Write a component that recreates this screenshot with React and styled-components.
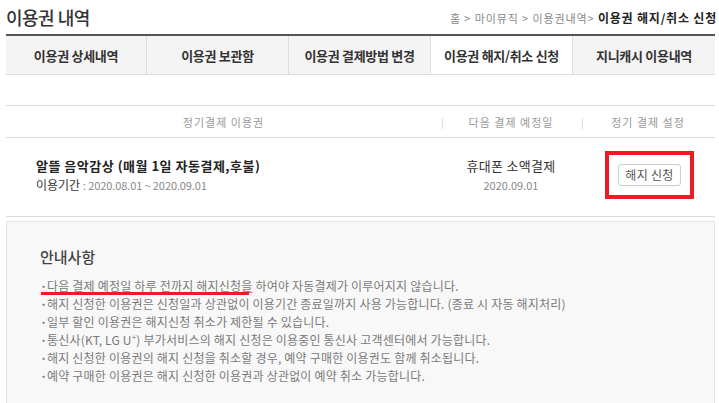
import React from "react";
import styled, { createGlobalStyle } from "styled-components";

const GlobalStyle = createGlobalStyle`
  html, body {
    margin: 0;
    padding: 0;
    background: #ffffff;
    font-family: "Noto Sans CJK KR", "Noto Sans", sans-serif;
    color: #333;
    overflow: hidden;
  }
`;

const Page = styled.div`
  width: 719px;
  height: 403px;
  box-sizing: border-box;
  padding: 0 4px 0 6px;
  overflow: hidden;
`;

const TopBar = styled.div`
  display: flex;
  justify-content: space-between;
  align-items: center;
  height: 34px;
`;

const Title = styled.h2`
  margin: 0;
  font-size: 18px;
  font-weight: 500;
  color: #333;
  letter-spacing: -0.5px;
`;

const Breadcrumb = styled.div`
  font-size: 11px;
  color: #888;
  letter-spacing: 0.9px;
  margin-right: -2px;

  strong {
    color: #222;
    font-size: 12px;
    font-weight: 700;
    letter-spacing: 0.8px;
  }
`;

const Tabs = styled.ul`
  display: grid;
  grid-template-columns: 140px 142px 142px 142px 1fr;
  margin: 0;
  padding: 0;
  list-style: none;
  border-top: 2px solid #555;
  border-bottom: 1px solid #ddd;
  height: 38px;
`;

const Tab = styled.li`
  display: flex;
  align-items: center;
  justify-content: center;
  font-size: 13px;
  font-weight: 700;
  color: #333;
  background: ${(p) => (p.$active ? "#fff" : "#f4f4f4")};
  border-left: ${(p) => (p.$first ? "none" : "1px solid #ddd")};
  letter-spacing: -0.3px;
`;

const Table = styled.div`
  margin-top: 30px;
  border-top: 1px solid #ddd;
`;

const HeadRow = styled.div`
  display: grid;
  grid-template-columns: 435px 140px 1fr;
  height: 31px;
  align-items: center;
  border-bottom: 1px solid #ddd;
`;

const HeadCell = styled.div`
  position: relative;
  text-align: center;
  font-size: 11px;
  color: #999;
  letter-spacing: 1px;

  &::before {
    content: "${(p) => (p.$sep ? "|" : "")}";
    position: absolute;
    left: 0;
    top: 0;
    color: #ccc;
    font-size: 10px;
  }
`;

const BodyRow = styled.div`
  display: grid;
  grid-template-columns: 435px 140px 1fr;
  height: 78px;
  align-items: center;
  border-bottom: 1px solid #ddd;
`;

const Product = styled.div`
  padding-left: 30px;
  padding-bottom: 4px;
`;

const ProductName = styled.div`
  font-size: 13px;
  font-weight: 700;
  color: #222;
  letter-spacing: 0.5px;
  line-height: 20px;
`;

const Period = styled.div`
  font-size: 12px;
  color: #333;
  line-height: 18px;

  span {
    font-size: 11px;
    color: #888;
    letter-spacing: -0.1px;
  }
`;

const PayCell = styled.div`
  text-align: center;
  padding-bottom: 4px;
`;

const PayMethod = styled.div`
  font-size: 13px;
  color: #333;
  line-height: 20px;
  letter-spacing: 0.3px;
`;

const PayDate = styled.div`
  font-size: 11px;
  color: #888;
  line-height: 18px;
`;

const SettingCell = styled.div`
  display: flex;
  justify-content: center;
  padding-left: 3px;
  padding-bottom: 4px;
`;

const Highlight = styled.div`
  border: 4px solid #ed1c24;
  padding: 6px 9px 9px 9px;
`;

const CancelButton = styled.button`
  width: 63px;
  height: 22px;
  padding: 0;
  border: 1px solid #ccc;
  border-radius: 3px;
  background: #fff;
  font-family: inherit;
  font-size: 12px;
  color: #555;
  letter-spacing: 0.3px;
`;

const InfoBox = styled.div`
  margin-top: 4px;
  background: #f8f8f8;
  border: 1px solid #e5e5e5;
  padding: 24px 33px 30px;
  height: 200px;
`;

const InfoTitle = styled.h3`
  margin: 0 0 9px;
  font-size: 15px;
  font-weight: 500;
  color: #444;
  line-height: 22px;
`;

const InfoList = styled.ul`
  margin: 0;
  padding: 0;
  list-style: none;
`;

const InfoItem = styled.li`
  position: relative;
  font-size: 12px;
  line-height: 18px;
  color: #7a7a7a;
  letter-spacing: 0.2px;

  &::before {
    content: "·";
    display: inline-block;
    width: 7px;
    font-weight: 700;
  }

  u {
    text-decoration-color: #999;
  }

  sup {
    font-size: 8px;
    line-height: 0;
  }
`;

const RedMark = styled.span`
  position: absolute;
  left: 1px;
  top: 15px;
  width: 208px;
  height: 3px;
  background: #ed1c24;
`;

const tabs = [
  "이용권 상세내역",
  "이용권 보관함",
  "이용권 결제방법 변경",
  "이용권 해지/취소 신청",
  "지니캐시 이용내역",
];

const notices = [
  "해지 신청한 이용권은 신청일과 상관없이 이용기간 종료일까지 사용 가능합니다. (종료 시 자동 해지처리)",
  "일부 할인 이용권은 해지신청 취소가 제한될 수 있습니다.",
  null,
  "해지 신청한 이용권의 해지 신청을 취소할 경우, 예약 구매한 이용권도 함께 취소됩니다.",
  "예약 구매한 이용권은 해지 신청한 이용권과 상관없이 예약 취소 가능합니다.",
];

export default function App() {
  return (
    <Page>
      <GlobalStyle />
      <TopBar>
        <Title>이용권 내역</Title>
        <Breadcrumb>
          홈 &gt; 마이뮤직 &gt; 이용권내역&gt; <strong>이용권 해지/취소 신청</strong>
        </Breadcrumb>
      </TopBar>

      <Tabs>
        {tabs.map((t, i) => (
          <Tab key={t} $first={i === 0} $active={i === 3}>
            {t}
          </Tab>
        ))}
      </Tabs>

      <Table>
        <HeadRow>
          <HeadCell>정기결제 이용권</HeadCell>
          <HeadCell $sep>다음 결제 예정일</HeadCell>
          <HeadCell $sep>정기 결제 설정</HeadCell>
        </HeadRow>
        <BodyRow>
          <Product>
            <ProductName>알뜰 음악감상 (매월 1일 자동결제,후불)</ProductName>
            <Period>
              이용기간 <span>: 2020.08.01 ~ 2020.09.01</span>
            </Period>
          </Product>
          <PayCell>
            <PayMethod>휴대폰 소액결제</PayMethod>
            <PayDate>2020.09.01</PayDate>
          </PayCell>
          <SettingCell>
            <Highlight>
              <CancelButton>해지 신청</CancelButton>
            </Highlight>
          </SettingCell>
        </BodyRow>
      </Table>

      <InfoBox>
        <InfoTitle>안내사항</InfoTitle>
        <InfoList>
          <InfoItem>
            <u>다음 결제 예정일 하루 전까지 해지신청을</u> 하여야 자동결제가 이루어지지 않습니다.
            <RedMark />
          </InfoItem>
          {notices.map((n, i) =>
            n ? (
              <InfoItem key={i}>{n}</InfoItem>
            ) : (
              <InfoItem key={i}>
                통신사(KT, LG U<sup>+</sup>) 부가서비스의 해지 신청은 이용중인 통신사 고객센터에서 가능합니다.
              </InfoItem>
            )
          )}
        </InfoList>
      </InfoBox>
    </Page>
  );
}
